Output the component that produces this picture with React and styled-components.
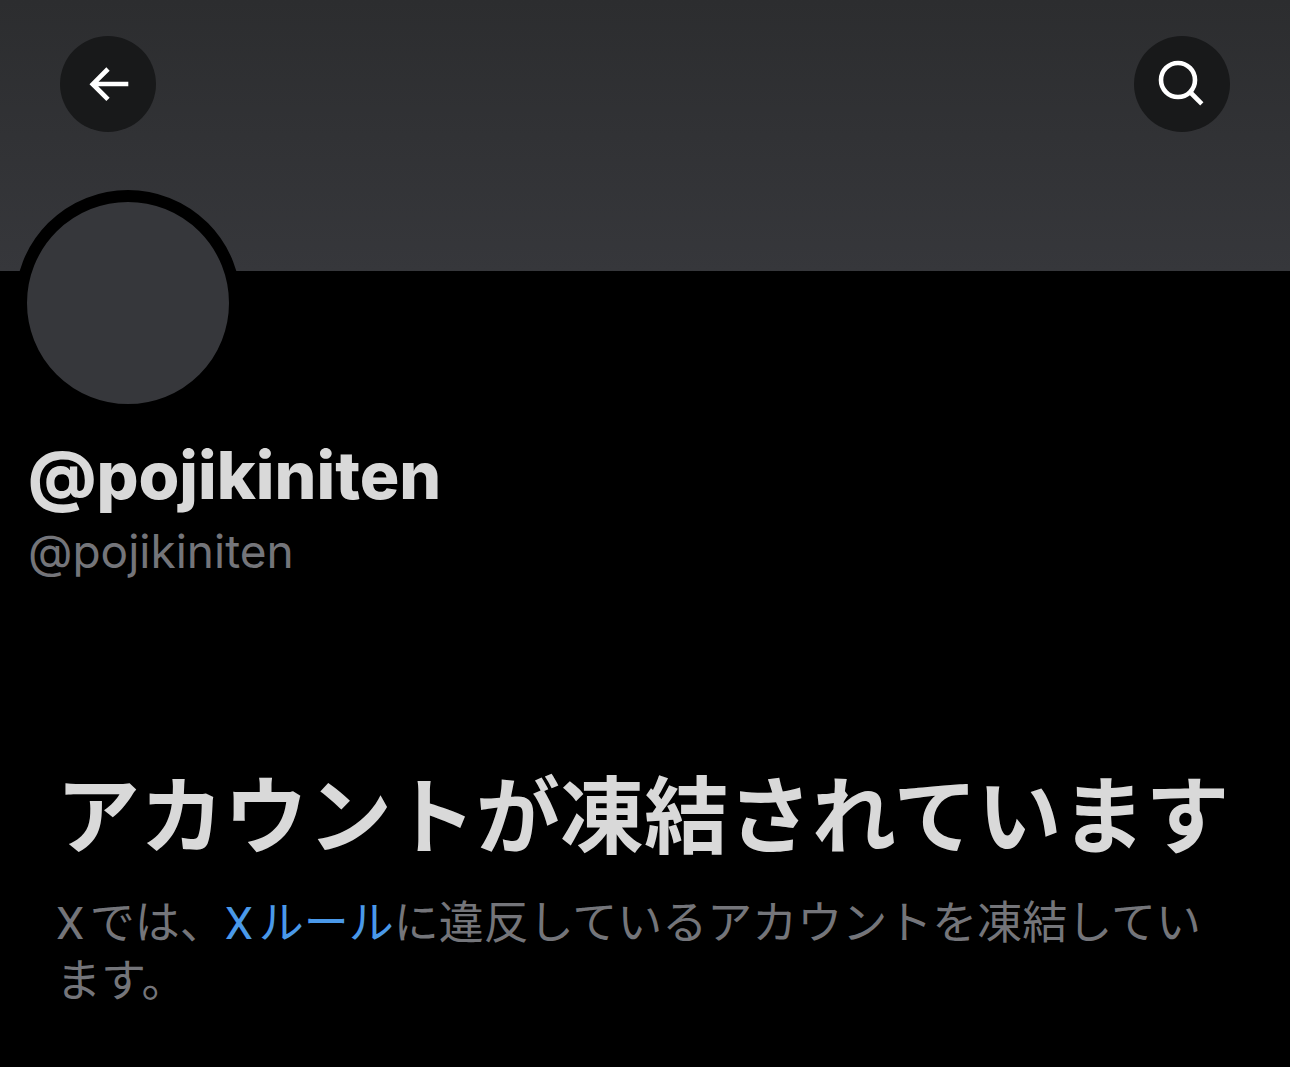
import React from "react";
import styled, { createGlobalStyle } from "styled-components";

const GlobalStyle = createGlobalStyle`
  * {
    box-sizing: border-box;
  }
  body {
    margin: 0;
    background-color: #000;
    color: #d9d9d9;
    font-family: Inter, "Noto Sans CJK JP", sans-serif;
  }
`;

const Banner = styled.header`
  display: flex;
  justify-content: space-between;
  align-items: flex-start;
  height: 271px;
  padding: 36px 60px;
  background: linear-gradient(#2c2d2f, #36373b);
`;

const RoundButton = styled.button`
  display: grid;
  place-items: center;
  width: 96px;
  height: 96px;
  padding: 0;
  border: none;
  border-radius: 50%;
  background-color: #18191a;
  color: #fff;
  cursor: pointer;
`;

const Profile = styled.section`
  padding: 0 28px;
`;

const Avatar = styled.div`
  width: 226px;
  height: 226px;
  margin: -81px 0 0 -13px;
  border: 12px solid #000;
  border-radius: 50%;
  background-color: #36373b;
`;

const DisplayName = styled.h1`
  margin: 20px 0 0;
  font-size: 66px;
  line-height: 78px;
  font-weight: 800;
`;

const Handle = styled.p`
  margin: 9px 0 0;
  font-size: 46px;
  line-height: 56px;
  color: #74757a;
`;

const Notice = styled.section`
  padding: 0 56px;
  margin-top: 176px;
`;

const NoticeTitle = styled.h2`
  margin: 0;
  font-size: 84px;
  line-height: 124px;
  font-weight: 700;
  white-space: nowrap;
`;

const NoticeText = styled.p`
  margin: 16px 0 0;
  font-family: Roboto, "Noto Sans CJK JP", sans-serif;
  font-size: 45px;
  line-height: 58px;
  text-autospace: normal;
  color: #74757a;
`;

const RuleLink = styled.a`
  color: #4a99e9;
  text-decoration: none;
`;

const App = () => {
  return (
    <>
      <GlobalStyle />
      <Banner>
        <RoundButton type="button" aria-label="戻る">
          <svg width="96" height="96" viewBox="0 0 96 96" fill="none">
            <path
              d="M68.3 48H33M48 33L32.8 48.2L48 63.4"
              stroke="currentColor"
              strokeWidth="4.7"
            />
          </svg>
        </RoundButton>
        <RoundButton type="button" aria-label="検索">
          <svg width="96" height="96" viewBox="0 0 96 96" fill="none">
            <circle cx="44" cy="44" r="17" stroke="currentColor" strokeWidth="4.6" />
            <path d="M56 56L67.8 67.8" stroke="currentColor" strokeWidth="4.6" />
          </svg>
        </RoundButton>
      </Banner>
      <main>
        <Profile>
          <Avatar />
          <DisplayName>@pojikiniten</DisplayName>
          <Handle>@pojikiniten</Handle>
        </Profile>
        <Notice>
          <NoticeTitle>アカウントが凍結されています</NoticeTitle>
          <NoticeText>
            Xでは、<RuleLink href="#rules">Xルール</RuleLink>
            に違反しているアカウントを凍結しています。
          </NoticeText>
        </Notice>
      </main>
    </>
  );
};

export default App;
